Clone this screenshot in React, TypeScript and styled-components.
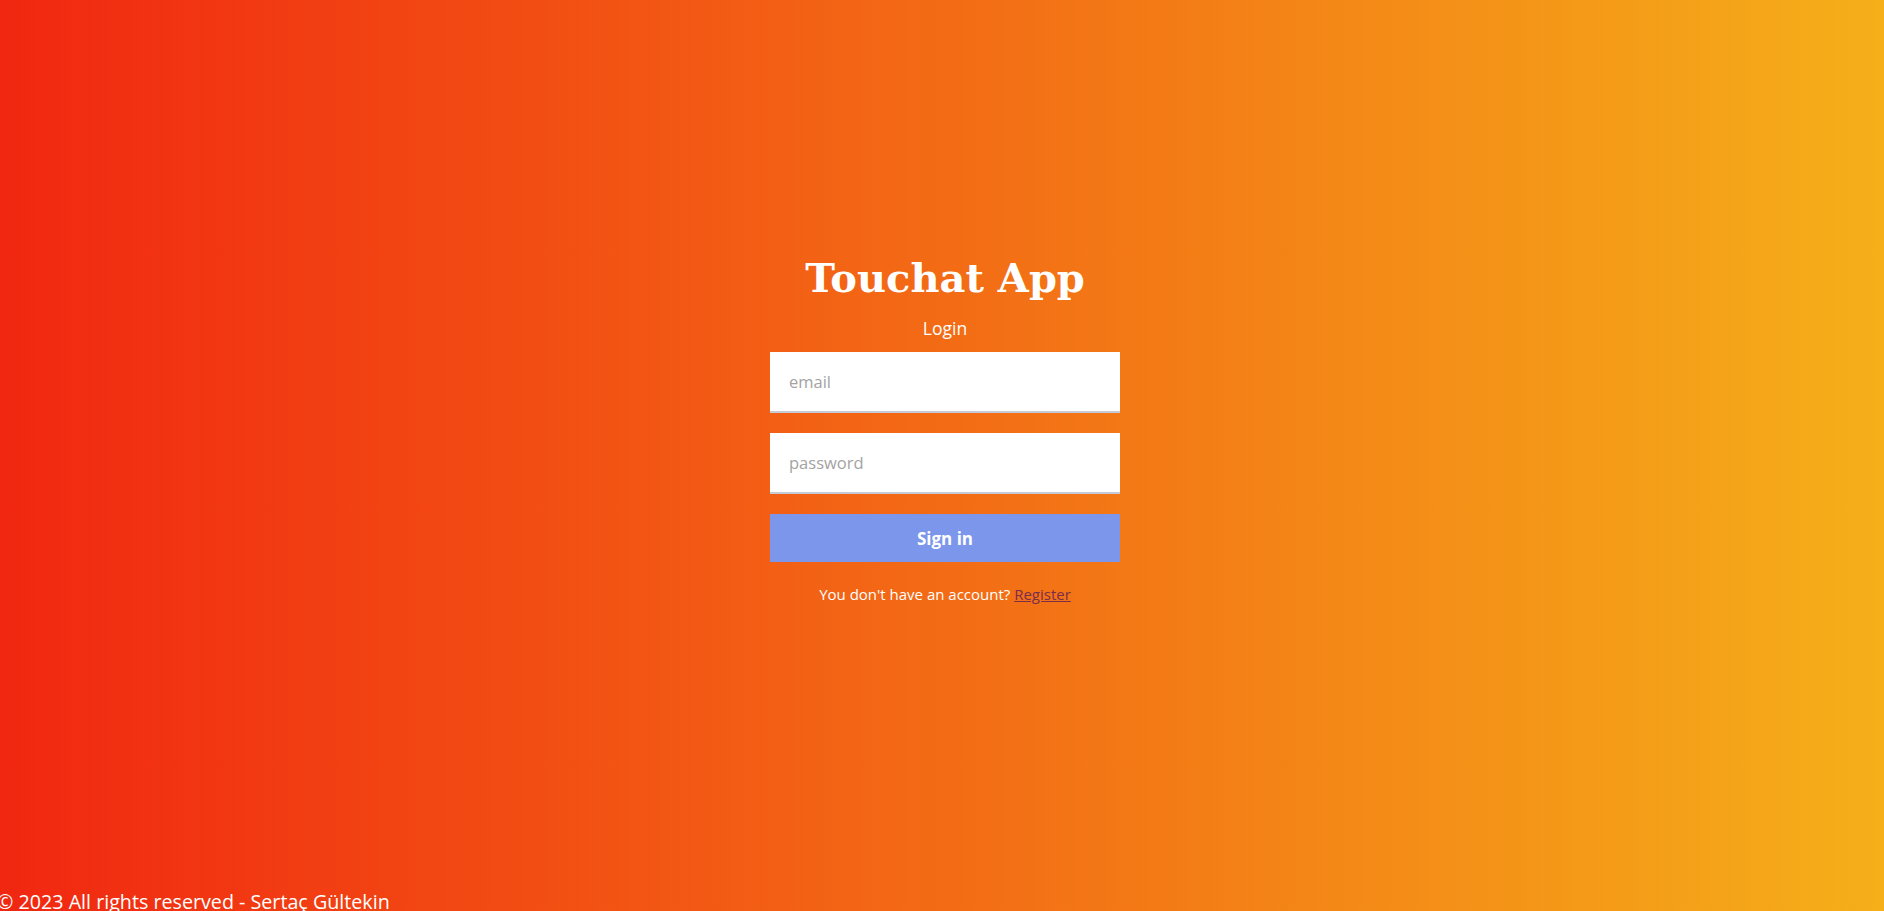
import React from "react";
import styled, { createGlobalStyle } from "styled-components";

const Global = createGlobalStyle`
  html, body { margin: 0; padding: 0; }
  body { font-family: "Open Sans", "Noto Sans", sans-serif; overflow: hidden; }
  * { box-sizing: border-box; }
`;

const Page = styled.div`
  height: 100vh;
  display: flex;
  flex-direction: column;
  overflow: hidden;
  background: linear-gradient(to right, #f12711, #f5af19);
  color: #fff;
`;

const Main = styled.main`
  flex: 1;
  display: flex;
  flex-direction: column;
  align-items: center;
  padding-top: 254px;
  padding-left: 6px;
`;

const Title = styled.h1`
  margin: 0;
  font-family: "DejaVu Serif", "Liberation Serif", serif;
  font-weight: 700;
  font-size: 40px;
  line-height: 1.2;
  color: #fff;
`;

const Subtitle = styled.h2`
  margin: 13px 0 0;
  font-size: 17.5px;
  font-weight: 400;
  line-height: 1.5;
`;

const Form = styled.form`
  margin-top: 11px;
  width: 350px;
  display: flex;
  flex-direction: column;
  gap: 20px;
`;

const Input = styled.input`
  width: 100%;
  height: 61px;
  border: none;
  border-bottom: 2px solid #c6c9d6;
  background: #fff;
  padding: 0 19px;
  font-family: "Open Sans", sans-serif;
  font-size: 16.5px;
  color: #333;
  outline: none;
  &::placeholder { color: #a3a3a3; }
`;

const Button = styled.button`
  width: 100%;
  height: 48px;
  border: none;
  background: #7b96ea;
  color: #fff;
  font-family: "Open Sans", sans-serif;
  font-weight: 700;
  font-size: 17px;
  cursor: pointer;
`;

const Note = styled.p`
  margin: 21px 0 0;
  font-size: 15px;
  line-height: 1.5;
`;

const Link = styled.a`
  color: #7a2d4c;
  text-decoration: underline;
`;

const Footer = styled.footer`
  flex-shrink: 0;
  font-size: 19.7px;
  line-height: 1.5;
  margin: 0 0 -6px -3px;
  white-space: nowrap;
`;

export default function App() {
  return (
    <>
      <Global />
      <Page>
        <Main>
          <Title>Touchat App</Title>
          <Subtitle>Login</Subtitle>
          <Form onSubmit={(e) => e.preventDefault()}>
            <Input type="email" placeholder="email" />
            <Input type="password" placeholder="password" />
            <Button type="submit">Sign in</Button>
          </Form>
          <Note>
            You don't have an account? <Link href="#">Register</Link>
          </Note>
        </Main>
        <Footer>© 2023 All rights reserved - Sertaç Gültekin</Footer>
      </Page>
    </>
  );
}
